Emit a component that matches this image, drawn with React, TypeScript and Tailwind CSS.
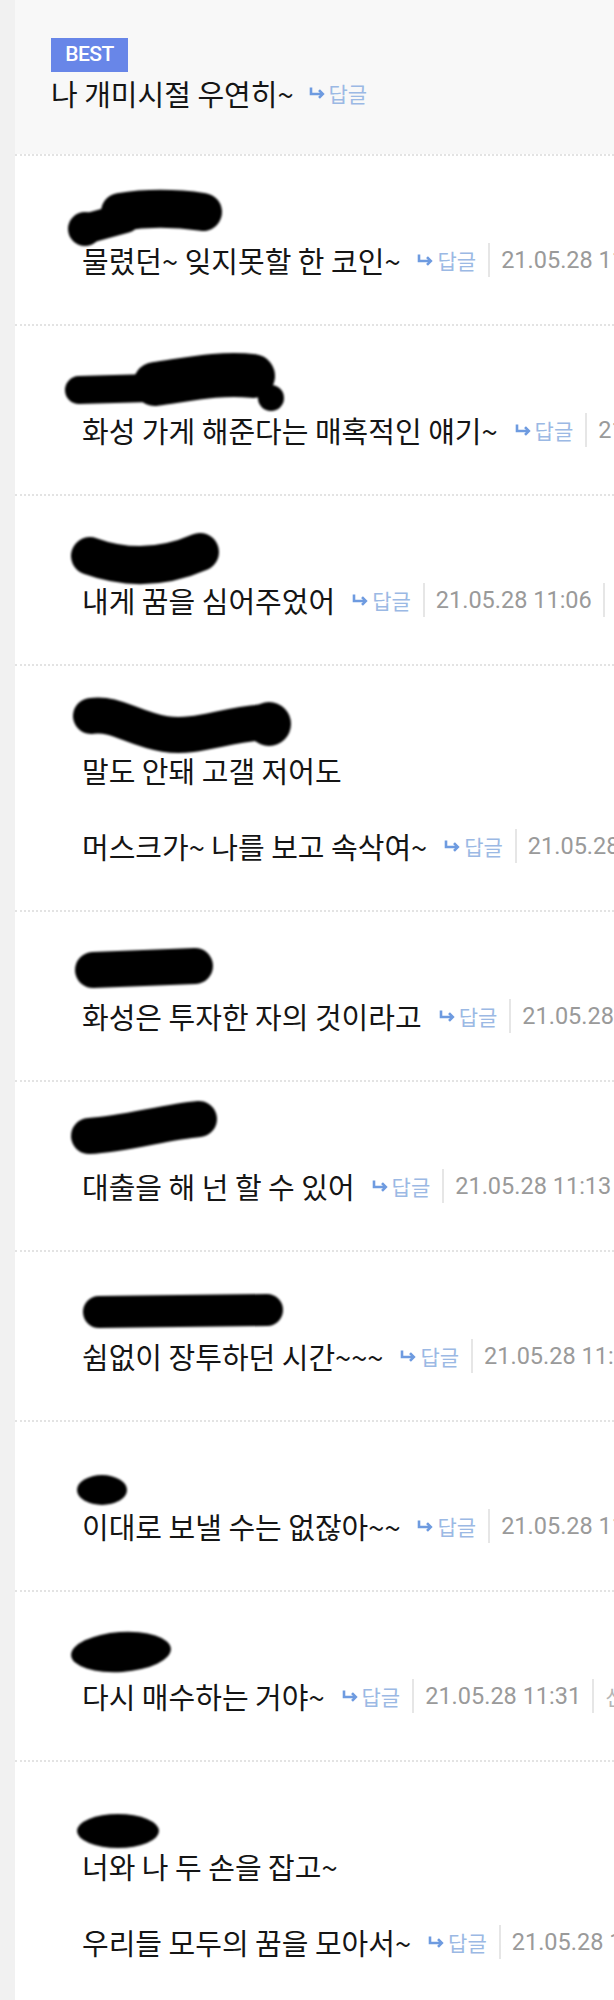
import type { ReactNode } from 'react'

const KR = "font-['Noto_Sans_CJK_KR','Noto_Sans',sans-serif]"

type Row = {
  lines: string[]
  time: string
  blob: ReactNode
}

// black marker scribbles over the nicknames
const ink = (d: string, w: number) => (
  <path d={d} stroke='#000' strokeWidth={w} strokeLinecap='round' strokeLinejoin='round' fill='none' />
)

const rows: Row[] = [
  {
    lines: ['물렸던~ 잊지못할 한 코인~'],
    time: '11:04',
    blob: <>{ink('M105 18 C130 14, 160 14, 188 18', 38)}<circle cx={70} cy={35} r={17} />{ink('M70 35 L110 24', 30)}</>
  },
  {
    lines: ['화성 가게 해준다는 매혹적인 얘기~'],
    time: '11:05',
    blob: <>{ink('M64 26 L135 24', 28)}{ink('M140 20 C170 16, 205 8, 238 12', 44)}<circle cx={256} cy={34} r={13} /></>
  },
  { lines: ['내게 꿈을 심어주었어'], time: '11:06', blob: ink('M75 22 Q130 42, 185 18', 38) },
  {
    lines: ['말도 안돼 고갤 저어도', '머스크가~ 나를 보고 속삭여~'],
    time: '11:08',
    blob: <>{ink('M76 12 C100 8, 118 25, 150 30 S210 20, 252 18', 36)}<circle cx={254} cy={20} r={22} /></>
  },
  { lines: ['화성은 투자한 자의 것이라고'], time: '11:10', blob: ink('M78 20 L180 16', 36) },
  { lines: ['대출을 해 넌 할 수 있어'], time: '11:13', blob: ink('M74 16 C110 14, 150 2, 184 -1', 36) },
  { lines: ['쉼없이 장투하던 시간~~~'], time: '11:15', blob: ink('M84 22 L252 20', 32) },
  { lines: ['이대로 보낼 수는 없잖아~~'], time: '11:20', blob: <ellipse cx={87} cy={30} rx={25} ry={15} /> },
  { lines: ['다시 매수하는 거야~'], time: '11:31', blob: <ellipse cx={106} cy={22} rx={50} ry={20} transform='rotate(-4 106 22)' /> },
  { lines: ['너와 나 두 손을 잡고~', '우리들 모두의 꿈을 모아서~'], time: '11:40', blob: <ellipse cx={103} cy={31} rx={41} ry={17} /> },
]

function ReplyLink () {
  return (
    <span className='flex items-center gap-[4px] shrink-0'>
      <svg width='16' height='14' viewBox='0 0 16 14' fill='none'>
        <path d='M2 1.5 V8 H13.5' stroke='#6e9be0' strokeWidth='2.6' />
        <path d='M10 4.2 L13.8 8 L10 11.8' stroke='#6e9be0' strokeWidth='2.6' />
      </svg>
      <span className={`${KR} text-[21px] text-[#9bb9e4]`}>답글</span>
    </span>
  )
}

function Meta ({ time }: { time: string }) {
  return (
    <span className='flex items-center shrink-0'>
      <ReplyLink />
      <span className='ml-[12px] mr-[11px] h-[34px] w-[2px] bg-[#e6e6e6]' />
      <span className="font-['Roboto',sans-serif] text-[23.5px] text-[#9a9a9a]">21.05.28 {time}</span>
      <span className='mx-[11px] h-[34px] w-[2px] bg-[#e6e6e6]' />
      <span className={`${KR} text-[21px] text-[#b5b5b5]`}>신고</span>
    </span>
  )
}

function Reply ({ row, idx }: { row: Row, idx: number }) {
  const last = row.lines.length - 1
  return (
    <div className='border-t-2 border-dotted border-[#e3e3e3] pt-[38px] pb-[45px]'>
      <svg width='300' height='47' className='relative z-10 block overflow-visible'>
        <filter id={`soft${idx}`} filterUnits='userSpaceOnUse' x='-60' y='-60' width='420' height='170'>
          <feGaussianBlur stdDeviation='1.2' />
        </filter>
        <g filter={`url(#soft${idx})`} fill='#000'>{row.blob}</g>
      </svg>
      <div className={`${KR} pl-[67px] text-[29px] leading-[38px] text-[#151515]`}>
        {row.lines.map((line, i) => (
          <div key={i}>
            {i > 0 && <div className='h-[38px]' />}
            {i === last
              ? (
                <div className='flex items-center gap-[17px] whitespace-nowrap'>
                  <span className='shrink-0'>{line}</span>
                  <Meta time={row.time} />
                </div>
                )
              : <div>{line}</div>}
          </div>
        ))}
      </div>
    </div>
  )
}

export default function App () {
  return (
    <div className='flex w-[614px] overflow-hidden bg-white'>
      <div className='w-[15px] shrink-0 bg-[#f1f1f1]' />
      <div className='min-w-0 flex-1'>
        <div className='bg-[#f8f8f8] pl-[36px] pt-[38px] pb-[42px]'>
          <div className="flex h-[34px] w-[77px] items-center justify-center bg-[#6886e8] font-['Roboto',sans-serif] text-[21px] font-medium tracking-[-0.5px] text-white">
            BEST
          </div>
          <div className={`${KR} mt-[2px] flex items-center gap-[15px] text-[29px] leading-[38px] text-[#151515]`}>
            <span>나 개미시절 우연히~</span>
            <ReplyLink />
          </div>
        </div>
        {rows.map((row, i) => <Reply key={i} row={row} idx={i} />)}
      </div>
    </div>
  )
}
